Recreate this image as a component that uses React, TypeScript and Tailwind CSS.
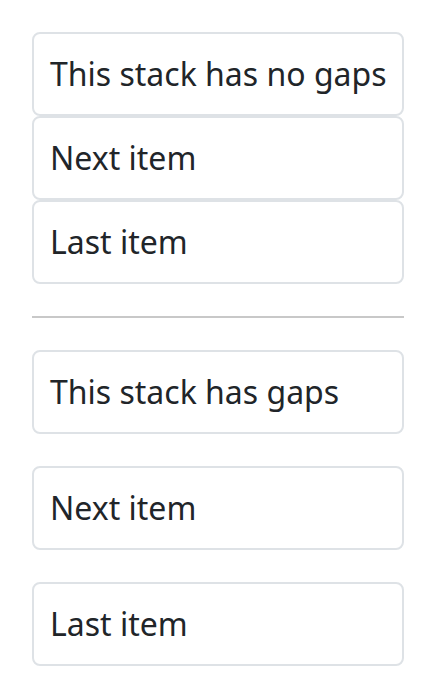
const items = ['Next item', 'Last item']

function Item({ label }: { label: string }) {
  return (
    <div className="whitespace-nowrap rounded-lg border-2 border-[#dee2e6] bg-white p-4 text-[32px] leading-[48px] text-[#212529]">
      {label}
    </div>
  )
}

export default function App() {
  return (
    <div
      className="bg-white p-8"
      style={{ fontFamily: '"Noto Sans", sans-serif' }}
    >
      {/* Stack without gaps */}
      <div className="flex flex-col">
        <Item label="This stack has no gaps" />
        {items.map((item) => (
          <Item key={item} label={item} />
        ))}
      </div>

      <hr className="my-8 border-t-2 border-[#c8c8c8]" />

      {/* Stack with gaps */}
      <div className="flex flex-col gap-8">
        <Item label="This stack has gaps" />
        {items.map((item) => (
          <Item key={item} label={item} />
        ))}
      </div>
    </div>
  )
}
